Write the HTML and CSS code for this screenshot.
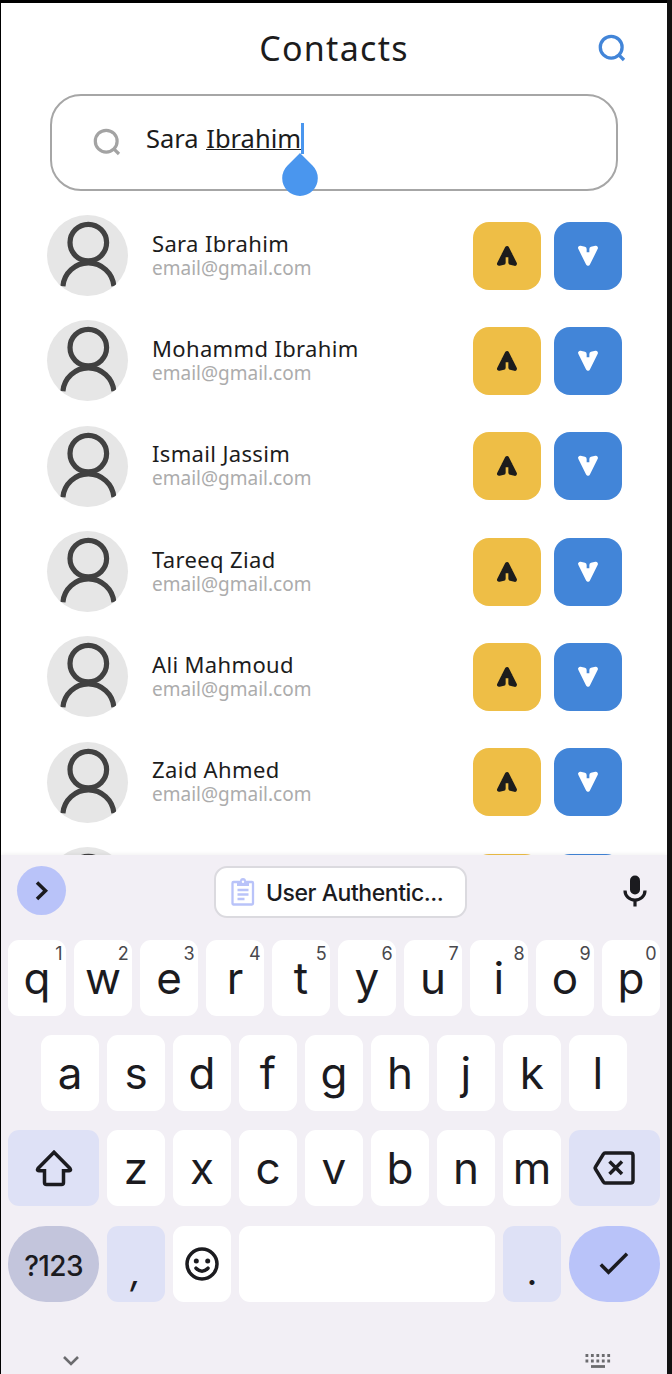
FILE: index.html
```html
<!DOCTYPE html>
<html lang="en">
<head>
<meta charset="utf-8">
<title>Contacts</title>
<link rel="stylesheet" href="styles.css">
</head>
<body>
<svg class="defs" aria-hidden="true">
  <symbol id="search" viewBox="0 0 28 28"><circle cx="13.2" cy="13.2" r="10.9"/><path d="M20.300 20.300L26 26"/></symbol>
  <symbol id="person" viewBox="0 0 81 81"><circle cx="41.3" cy="27.6" r="18.3"/><path d="M15.9 71.2a25.6 25.6 0 0 1 51 0"/></symbol>
  <symbol id="up" viewBox="0 0 22 22"><path d="M11 3.200L3.200 18.700L7.500 17.700V10H14.500V17.700L18.800 18.700Z"/></symbol>
  <symbol id="down" viewBox="0 0 22 22"><path d="M11 18.600L3.200 2.900L7.500 3.900V9.500H14.500V3.900L18.800 2.900Z"/></symbol>
</svg>
<div class="phone">
  <main class="app">
    <header class="header">
      <h1 class="title">Contacts</h1>
      <svg class="header-search"><use href="#search"/></svg>
    </header>
    <div class="search">
      <svg class="search-icon"><use href="#search"/></svg>
      <div class="query">Sara <span class="composing">Ibrahim</span><span class="caret"><svg class="handle" viewBox="0 0 36 43"><path d="M18 0L30.5 12.5A17.8 17.8 0 1 1 5.5 12.5Z"/></svg></span></div>
    </div>
    <ul class="contacts" id="contacts"></ul>
  </main>
  <section class="keyboard">
    <div class="toolbar">
      <div class="expand"><svg width="49" height="49" viewBox="0 0 49 49"><path d="M20 16.5L28.5 24.7L20 33"/></svg></div>
      <div class="clip">
        <svg width="24" height="28" viewBox="0 0 24 28"><rect x="1.5" y="4" width="20.5" height="22.5" rx="1"/><path class="solid" d="M6 3h3a3 3 0 0 1 6 0h3v5H6z"/><circle class="hole" cx="12" cy="3.7" r="1.2"/><path d="M6.500 12H17.500M6.500 16.500H17.500M6.500 21H13.500"/></svg>
        <span>User Authentic...</span>
      </div>
      <svg class="mic" width="24" height="32" viewBox="0 0 24 32"><rect x="7" y="0.5" width="10" height="19" rx="5"/><path d="M2 15.5C2 21 6.5 25 12 25S22 21 22 15.5M12 25V31.5"/></svg>
    </div>
    <div class="keys" id="keys">
      <div class="row" data-keys="qwertyuiop" data-hints="1234567890"></div>
      <div class="row inset" data-keys="asdfghjkl"></div>
      <div class="row" data-keys="zxcvbnm">
        <div class="key wide tint" data-end="start"><svg width="38" height="38" viewBox="0 0 38 38"><path d="M19 3.3L35 19.4Q36.5 21.5 34 21.8H28.500V33.500Q28.500 35.500 26.500 35.500H11.500Q9.500 35.500 9.500 33.500V21.800H4Q1.500 21.500 3 19.400Z"/></svg></div>
        <div class="key wide tint" data-end="finish"><svg width="42" height="34" viewBox="0 0 42 34"><path d="M12 2H37.500Q40 2 40 4.500V29.500Q40 32 37.500 32H12Q11 32 10.500 31L2.500 18Q1.800 17 2.500 16L10.500 3Q11 2 12 2Z"/><path d="M16.500 10.500L29 23M29 10.500L16.500 23"/></svg></div>
      </div>
      <div class="row">
        <div class="key wide pill symbols"><span>?123</span></div>
        <div class="key tint comma">,</div>
        <div class="key"><svg width="34" height="34" viewBox="0 0 34 34"><circle cx="17" cy="17" r="15"/><circle class="dot" cx="11.300" cy="14" r="2.500"/><circle class="dot" cx="22.700" cy="14" r="2.500"/><path d="M11 21.200Q17 27.200 23 21.200" stroke-linecap="round"/></svg></div>
        <div class="key space"></div>
        <div class="key tint period">.</div>
        <div class="key wide pill enter"><svg width="30" height="24" viewBox="0 0 30 24"><path d="M1.800 12.500L9.500 20.300L28 1.800"/></svg></div>
      </div>
    </div>
    <div class="nav">
      <svg width="18" height="12" viewBox="0 0 18 12"><path d="M2 2L9 9L16 2"/></svg>
      <svg width="26" height="16" viewBox="0 0 26 16"><path d="M0.500 2.500H26M0.500 8H26" stroke-dasharray="2.800 2.650" stroke-width="2.800"/><path d="M6 13.500H20" stroke-width="2.800"/></svg>
    </div>
  </section>
</div>
<script src="app.js"></script>
</body>
</html>
```
FILE: styles.css
```css
* { box-sizing: border-box; }
body { margin: 0; background: #111; font-family: "Noto Sans", sans-serif; color: #1c1c1c; }
svg { display: block; fill: none; stroke: currentColor; flex: none; }
.defs { position: absolute; width: 0; height: 0; }

.phone {
  width: 667px; height: 1374px; background: #fff; overflow: hidden;
  border-top: 3px solid #000; border-left: 1px solid #000;
  display: flex; flex-direction: column;
}
.app { height: 851.5px; overflow: hidden; flex: none; }

.header { height: 91px; padding-bottom: 2px; display: grid; grid-template-columns: 100px 1fr 100px; align-items: center; }
.title { grid-column: 2; margin: 0; text-align: center; font-size: 34px; font-weight: 400; line-height: 40px; letter-spacing: 1.300px; }
.header-search { width: 28px; height: 28px; color: #4285d8; stroke-width: 3.300px; margin-left: 31px; }

.search {
  margin: 0 49px; height: 96.500px; border: 2px solid #a6a6a6; border-radius: 31px;
  padding: 25px 0 0 41px; display: flex; align-items: flex-start;
}
.search-icon { width: 28px; height: 28px; color: #a3a3a3; stroke-width: 3.200px; margin-top: 7px; }
.query { display: flex; margin-left: 25px; font-size: 25.500px; line-height: 34px; white-space: pre; }
.composing { height: 29px; margin-left: 1px; border-bottom: 1.500px solid #1c1c1c; }
.caret { position: relative; width: 3px; height: 31px; margin-top: 2px; background: #4a96ee; }
.handle { position: absolute; left: -19px; top: 30px; width: 36px; height: 43px; fill: #4a96ee; stroke: none; }

.contacts { list-style: none; margin: 24.500px 0 0; padding: 0 45px 0 46px; display: flex; flex-direction: column; gap: 24.350px; }
.contact { height: 81px; display: flex; align-items: center; flex: none; }
.avatar { width: 81px; height: 81px; border-radius: 50%; background: #e6e6e6; color: #414141; stroke-width: 5.200px; overflow: hidden; }
.who { flex: 1; margin-left: 24px; }
.name { font-size: 22px; line-height: 25px; letter-spacing: 0.350px; white-space: nowrap; }
.email { font-size: 19px; line-height: 25px; color: #acacac; }
.actions { display: flex; gap: 13px; }
.action { width: 68px; height: 68px; border-radius: 16px; display: grid; place-items: center; }
.action svg { width: 22px; height: 22px; stroke-width: 4.300px; stroke-linejoin: round; fill: currentColor; }
.call { background: #eebe46; }
.video { background: #4285d8; color: #fff; }

.keyboard { flex: 1; background: #f2eff5; color: #1b1b1f; font-family: Inter, sans-serif; box-shadow: 0 -1px 4px rgba(0,0,0,.06); position: relative; }
.toolbar { height: 85px; padding: 11px 20px 0 16px; display: grid; grid-template-columns: 197px 253px 1fr; align-items: start; }
.expand { width: 49px; height: 49px; border-radius: 50%; background: #b9c3f9; stroke-width: 3.500px; }
.clip { height: 52px; border: 2px solid #dbdadf; border-radius: 13px; background: #fff; display: flex; align-items: center; gap: 11px; padding-left: 15px; font-size: 23px; font-weight: 500; letter-spacing: -0.450px; white-space: nowrap; }
.clip span { padding-top: 2px; }
.clip svg { color: #b9c3f9; stroke-width: 2.300px; }
.clip .solid { fill: currentColor; stroke: none; }
.clip .hole { fill: #fff; stroke: none; }
.mic { justify-self: end; margin-top: 9px; stroke-width: 3.200px; }
.mic rect { fill: currentColor; stroke: none; }

.keys { padding-left: 7.400px; display: flex; flex-direction: column; gap: 19.200px; }
.row { display: flex; gap: 8.700px; height: 76.200px; }
.inset { padding-left: 33px; }
.key { width: 57.300px; border-radius: 11px; background: #fff; display: grid; place-items: center; position: relative; font-size: 44px; font-weight: 400; line-height: 74px; }
.key svg { stroke-width: 3.500px; }
.hint { position: absolute; right: 3px; top: 4px; font-size: 18px; line-height: 20px; color: #48484c; }
.wide { width: 90.300px; }
.tint { background: #dee1f6; }
.pill { border-radius: 38px; }
.symbols { background: #c3c5dc; font-size: 28px; font-weight: 500; letter-spacing: -0.600px; }
.symbols span { padding-top: 3px; }
.comma, .period { line-height: 90px; font-size: 38px; }
.comma { font-style: italic; }
.space { width: 255.300px; }
.enter { background: #b9c3f9; }
.key .dot { fill: currentColor; stroke: none; }
.nav { display: flex; justify-content: space-between; align-items: center; padding: 51px 56px 0 61px; color: #6b6b6e; stroke-width: 2.600px; }
```
FILE: app.js
```js
const names = ["Sara Ibrahim", "Mohammd Ibrahim", "Ismail Jassim", "Tareeq Ziad", "Ali Mahmoud", "Zaid Ahmed", ""];
document.getElementById("contacts").innerHTML = names.map(name => `
  <li class="contact">
    <svg class="avatar"><use href="#person"/></svg>
    <div class="who">${name ? `<div class="name">${name}</div><div class="email">email@gmail.com</div>` : ""}</div>
    <div class="actions">
      <div class="action call"><svg><use href="#up"/></svg></div>
      <div class="action video"><svg><use href="#down"/></svg></div>
    </div>
  </li>`).join("");

document.querySelectorAll("[data-keys]").forEach(row => {
  const finish = row.querySelector('[data-end="finish"]');
  [...row.dataset.keys].forEach((letter, i) => {
    const key = document.createElement("div");
    key.className = "key";
    const hint = row.dataset.hints ? `<span class="hint">${row.dataset.hints[i]}</span>` : "";
    key.innerHTML = `<span>${letter}</span>${hint}`;
    row.insertBefore(key, finish);
  });
});
```
